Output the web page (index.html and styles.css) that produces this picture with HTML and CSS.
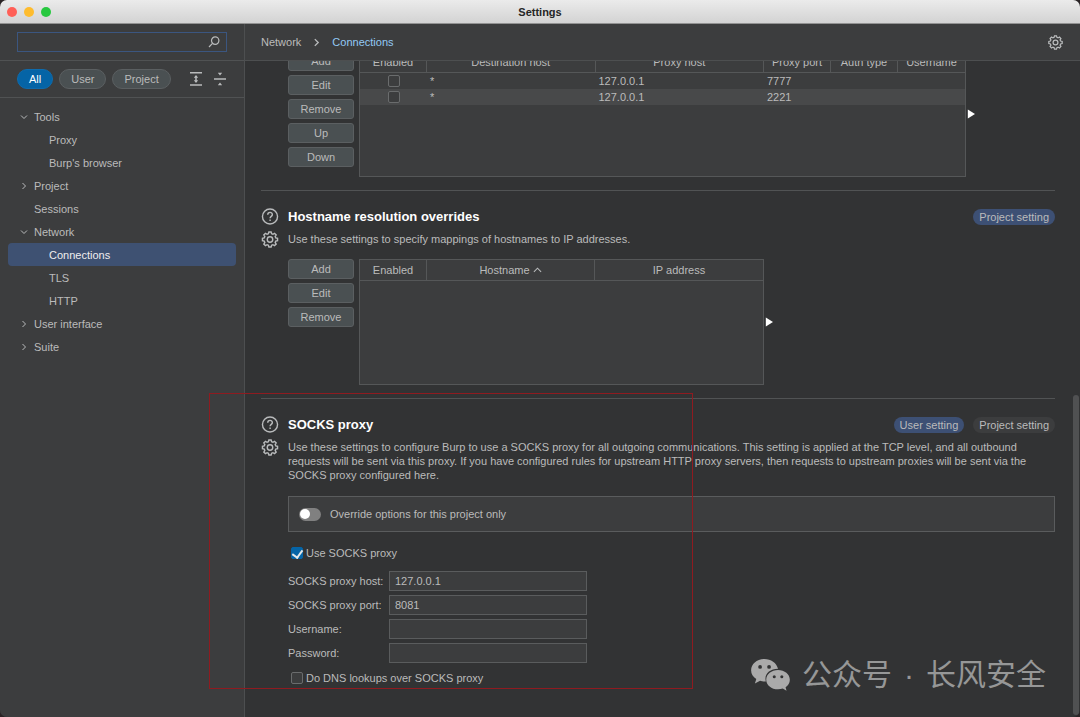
FILE: index.html
```html
<!DOCTYPE html>
<html lang="en">
<head>
    <meta charset="UTF-8">
    <meta name="viewport" content="width=device-width, initial-scale=1.0">
    <title>Settings</title>
    <link rel="stylesheet" href="styles.css">
</head>
<body>
    <!-- shared icons -->
    <svg class="sprite" width="0" height="0">
        <symbol id="gear" viewBox="0 0 18 18">
            <path d="M7.3 2.9 L7.8 1 H10.2 L10.7 2.9 L12.1 3.5 L13.8 2.5 L15.5 4.2 L14.5 5.9 L15.1 7.3 L17 7.8 V10.2 L15.1 10.7 L14.5 12.1 L15.5 13.8 L13.8 15.5 L12.1 14.5 L10.7 15.1 L10.2 17 H7.8 L7.3 15.1 L5.9 14.5 L4.2 15.5 L2.5 13.8 L3.5 12.1 L2.9 10.7 L1 10.2 V7.8 L2.9 7.3 L3.5 5.9 L2.5 4.2 L4.2 2.5 L5.9 3.5 Z"/>
            <circle cx="9" cy="9" r="2.9"/>
        </symbol>
        <symbol id="help" viewBox="0 0 18 18">
            <circle cx="9" cy="9" r="8"/>
            <path d="M6.6 7.2 C6.6 3.8 11.6 3.9 11.5 7 C11.4 8.9 9.1 8.8 9.1 10.9 M9.1 12.3 V13.8"/>
        </symbol>
        <symbol id="chevron" viewBox="0 0 8 8">
            <path d="M2.5 1 L5.5 4 L2.5 7"/>
        </symbol>
    </svg>

    <div class="window">
        <header class="titlebar">
            <div class="lights">
                <button class="light close" aria-label="Close"></button>
                <button class="light minimise" aria-label="Minimise"></button>
                <button class="light zoom" aria-label="Zoom"></button>
            </div>
            <h1>Settings</h1>
        </header>

        <div class="panes">
            <aside class="sidebar">
                <form class="search">
                    <div class="search-box">
                        <input type="text" aria-label="Search settings">
                        <svg class="icon search-icon" viewBox="0 0 12 12"><circle cx="7.2" cy="4.6" r="3.7"/><path d="M4.5 7.3 L1 11"/></svg>
                    </div>
                </form>
                <div class="filters">
                    <button class="pill active">All</button>
                    <button class="pill">User</button>
                    <button class="pill">Project</button>
                    <button class="tool expand" aria-label="Expand all">
                        <svg class="icon" viewBox="0 0 14 14"><path d="M1 .8 H13 M1 13 H13 M7 5 V9"/><path class="fill" d="M7 3 L9.2 5.7 H4.8 Z M7 11 L9.2 8.3 H4.8 Z"/></svg>
                    </button>
                    <button class="tool" aria-label="Collapse all">
                        <svg class="icon" viewBox="0 0 14 14"><path d="M1 7 H13"/><path class="fill" d="M7 3.6 L9.2 .8 H4.8 Z M7 10.4 L9.2 13.2 H4.8 Z"/></svg>
                    </button>
                </div>
                <nav>
                    <ul class="tree">
                        <li><a href="#"><svg class="icon chevron open"><use href="#chevron"/></svg>Tools</a></li>
                        <li><a href="#" class="child">Proxy</a></li>
                        <li><a href="#" class="child">Burp's browser</a></li>
                        <li><a href="#"><svg class="icon chevron"><use href="#chevron"/></svg>Project</a></li>
                        <li><a href="#" class="leaf">Sessions</a></li>
                        <li><a href="#"><svg class="icon chevron open"><use href="#chevron"/></svg>Network</a></li>
                        <li><a href="#" class="child selected">Connections</a></li>
                        <li><a href="#" class="child">TLS</a></li>
                        <li><a href="#" class="child">HTTP</a></li>
                        <li><a href="#"><svg class="icon chevron"><use href="#chevron"/></svg>User interface</a></li>
                        <li><a href="#"><svg class="icon chevron"><use href="#chevron"/></svg>Suite</a></li>
                    </ul>
                </nav>
            </aside>

            <main class="main">
                <div class="crumbs">
                    <a href="#">Network</a>
                    <svg class="icon crumb-arrow"><use href="#chevron"/></svg>
                    <a href="#" class="current">Connections</a>
                    <button class="icon-button options" aria-label="Options"><svg class="icon"><use href="#gear"/></svg></button>
                </div>

                <div class="scroller">
                    <div class="content">
                        <section class="section upstream">
                            <div class="body">
                                <div class="editor">
                                    <div class="buttons">
                                        <button>Add</button>
                                        <button>Edit</button>
                                        <button>Remove</button>
                                        <button>Up</button>
                                        <button>Down</button>
                                    </div>
                                    <div class="table-box wide">
                                        <table>
                                            <colgroup>
                                                <col class="narrow"><col><col><col class="narrow"><col class="narrow"><col class="narrow">
                                            </colgroup>
                                            <thead>
                                                <tr><th>Enabled</th><th>Destination host</th><th>Proxy host</th><th>Proxy port</th><th>Auth type</th><th>Username</th></tr>
                                            </thead>
                                            <tbody>
                                                <tr><td class="tick"><input type="checkbox" aria-label="Enable 127.0.0.1:7777"></td><td>*</td><td>127.0.0.1</td><td>7777</td><td></td><td></td></tr>
                                                <tr><td class="tick"><input type="checkbox" aria-label="Enable 127.0.0.1:2221"></td><td>*</td><td>127.0.0.1</td><td>2221</td><td></td><td></td></tr>
                                            </tbody>
                                        </table>
                                    </div>
                                    <button class="expander" aria-label="Widen table"></button>
                                </div>
                            </div>
                        </section>

                        <section class="section">
                            <div class="side-icons">
                                <button class="icon-button" aria-label="Help"><svg class="icon"><use href="#help"/></svg></button>
                                <button class="icon-button" aria-label="Options"><svg class="icon"><use href="#gear"/></svg></button>
                            </div>
                            <div class="body">
                                <div class="heading">
                                    <h2>Hostname resolution overrides</h2>
                                    <span class="badge on">Project setting</span>
                                </div>
                                <p>Use these settings to specify mappings of hostnames to IP addresses.</p>
                                <div class="editor">
                                    <div class="buttons">
                                        <button>Add</button>
                                        <button>Edit</button>
                                        <button>Remove</button>
                                    </div>
                                    <div class="table-box">
                                        <table>
                                            <colgroup><col class="narrow"><col><col></colgroup>
                                            <thead>
                                                <tr><th>Enabled</th><th>Hostname <svg class="icon sort" viewBox="0 0 10 6"><path d="M1 5 L5 1 L9 5"/></svg></th><th>IP address</th></tr>
                                            </thead>
                                        </table>
                                    </div>
                                    <button class="expander" aria-label="Widen table"></button>
                                </div>
                            </div>
                        </section>

                        <section class="section">
                            <div class="side-icons">
                                <button class="icon-button" aria-label="Help"><svg class="icon"><use href="#help"/></svg></button>
                                <button class="icon-button" aria-label="Options"><svg class="icon"><use href="#gear"/></svg></button>
                            </div>
                            <div class="body">
                                <div class="heading">
                                    <h2>SOCKS proxy</h2>
                                    <span class="badge on">User setting</span>
                                    <span class="badge">Project setting</span>
                                </div>
                                <p>Use these settings to configure Burp to use a SOCKS proxy for all outgoing communications. This setting is applied at the TCP level, and all outbound requests will be sent via this proxy. If you have configured rules for upstream HTTP proxy servers, then requests to upstream proxies will be sent via the SOCKS proxy configured here.</p>
                                <div class="override">
                                    <input type="checkbox" role="switch" class="switch" id="override">
                                    <label for="override">Override options for this project only</label>
                                </div>
                                <div class="check-row">
                                    <input type="checkbox" id="use-socks" checked>
                                    <label for="use-socks">Use SOCKS proxy</label>
                                </div>
                                <div class="fields">
                                    <label for="host">SOCKS proxy host:</label>
                                    <input type="text" id="host" value="127.0.0.1">
                                    <label for="port">SOCKS proxy port:</label>
                                    <input type="text" id="port" value="8081">
                                    <label for="username">Username:</label>
                                    <input type="text" id="username">
                                    <label for="password">Password:</label>
                                    <input type="password" id="password">
                                </div>
                                <div class="check-row">
                                    <input type="checkbox" id="dns">
                                    <label for="dns">Do DNS lookups over SOCKS proxy</label>
                                </div>
                            </div>
                        </section>
                    </div>
                    <div class="scrollbar"><div class="thumb"></div></div>
                </div>
            </main>
        </div>

        <div class="marker"></div>
        <div class="watermark" lang="zh">
            <svg viewBox="0 0 42 36">
                <path d="M15 1 C7 1 1 6.400 1 13 C1 17 3 20 6.500 22.300 L5 27 L10.500 24 C12.500 24.700 14.800 25 16.600 24.800 C14.500 17.500 20.500 11.500 29.500 11.500 C28 5 22 1 15 1 Z"/>
                <path d="M29.500 12.800 C22.500 12.800 17 17.300 17 23 C17 28.700 22.500 33.200 29.500 33.200 C31.300 33.200 33 32.900 34.500 32.400 L38.500 34.600 L37.500 31 C40.300 29 42 26.200 42 23 C42 17.300 36.500 12.800 29.500 12.800 Z"/>
                <g class="eyes"><circle cx="10.500" cy="9.500" r="2"/><circle cx="20" cy="9.500" r="2"/><circle cx="25.500" cy="19.800" r="1.600"/><circle cx="33.500" cy="19.800" r="1.600"/></g>
            </svg>
            <span>公众号</span><span>·</span><span>长风安全</span>
        </div>
    </div>
</body>
</html>
```
FILE: styles.css
```css
* {
    box-sizing: border-box;
}
body {
    margin: 0;
    height: 100vh;
    overflow: hidden;
    background-color: #2a2325;
    color: #bbbbbb;
    font-family: "Liberation Sans", Arial, sans-serif;
    font-size: 11px;
    line-height: 14px;
}
button, input {
    margin: 0;
    padding: 0;
    border: none;
    background: none;
    color: inherit;
    font: inherit;
}
a {
    color: inherit;
    text-decoration: none;
}
.sprite {
    position: absolute;
}
.icon {
    display: block;
    width: 100%;
    height: 100%;
    fill: none;
    stroke: #b9bbbc;
    stroke-width: 1.5;
    overflow: visible;
}
.icon .fill {
    fill: #b9bbbc;
    stroke: none;
}

/* window */
.window {
    position: relative;
    display: flex;
    flex-direction: column;
    height: 100%;
    border-radius: 7px;
    overflow: hidden;
    background-color: #323334;
}
.titlebar {
    display: flex;
    align-items: center;
    flex: none;
    height: 24px;
    padding: 0 7px;
    background: linear-gradient(#ebebeb, #d3d3d3);
    border-bottom: 1px solid #929292;
}
.lights {
    display: flex;
    flex: 1;
    gap: 7px;
}
.light {
    width: 10px;
    height: 10px;
    border-radius: 50%;
}
.close {
    background-color: #ff5f57;
}
.minimise {
    background-color: #febc2e;
}
.zoom {
    background-color: #28c840;
}
.titlebar h1 {
    margin: 0;
    color: #262626;
    font-size: 11px;
}
.titlebar::after {
    content: "";
    flex: 1;
}
.panes {
    display: flex;
    flex: 1;
    min-height: 0;
}

/* sidebar */
.sidebar {
    flex: none;
    width: 245px;
    background-color: #3c3d3e;
    border-right: 1px solid #4d4f50;
}
.search, .filters {
    display: flex;
    align-items: center;
    height: 37px;
    padding: 0 17px;
    border-bottom: 1px solid #505253;
}
.search-box {
    display: flex;
    align-items: center;
    width: 100%;
    height: 20px;
    padding: 0 6px;
    border: 1px solid #3b5680;
}
.search-box input {
    flex: 1;
    min-width: 0;
    outline: none;
}
.search-icon {
    width: 12px;
    height: 12px;
    stroke-width: 1.2;
}
.pill {
    height: 20px;
    margin-right: 6px;
    padding: 0 11px;
    border: 1px solid #5b5f61;
    border-radius: 10px;
    background-color: #4a5052;
}
.pill.active {
    border-color: #0e6bad;
    background-color: #0564a6;
    color: #ffffff;
}
.tool {
    width: 14px;
    height: 14px;
}
.tool.expand {
    margin: 0 10px 0 auto;
}
.tree {
    margin: 0;
    padding: 7px 8px;
    list-style: none;
}
.tree a {
    display: flex;
    align-items: center;
    gap: 6px;
    height: 23px;
    padding-left: 12px;
    border-radius: 4px;
}
.tree .leaf {
    padding-left: 26px;
}
.tree .child {
    padding-left: 41px;
}
.tree .selected {
    background-color: #3e5172;
    color: #eeeeee;
}
.chevron {
    width: 8px;
    height: 8px;
    stroke-width: 1;
}
.chevron.open {
    transform: rotate(90deg);
}

/* main pane */
.main {
    display: flex;
    flex-direction: column;
    flex: 1;
    min-width: 0;
}
.crumbs {
    display: flex;
    align-items: center;
    flex: none;
    height: 37px;
    padding: 0 17px 0 16px;
    background-color: #3c3d3e;
    border-bottom: 1px solid #4d4f50;
}
.crumb-arrow {
    width: 9px;
    height: 9px;
    margin: 0 11px;
    stroke-width: 1.2;
}
.crumbs .current {
    color: #93c9f5;
}
.icon-button {
    display: block;
    width: 18px;
    height: 17px;
    border-radius: 50%;
}
.icon-button.options {
    width: 15px;
    height: 15px;
    margin-left: auto;
}
.scroller {
    display: flex;
    flex: 1;
    min-height: 0;
    overflow: hidden;
}
/* content sits scrolled part of the way down */
.content {
    flex: 1;
    min-width: 0;
    margin-top: -10px;
    padding: 0 18px 0 16px;
}
.scrollbar {
    display: flex;
    flex-direction: column;
    justify-content: flex-end;
    width: 7px;
    padding: 0 1px 2px 0;
}
.thumb {
    height: 49%;
    border-radius: 3px;
    background-color: #505152;
}
.section {
    display: flex;
    gap: 9px;
    padding: 17px 0 13px;
    border-top: 1px solid #515354;
}
.section.upstream {
    padding: 0 0 13px 27px;
    border-top: none;
}
.side-icons {
    display: flex;
    flex-direction: column;
    gap: 6px;
}
.body {
    flex: 1;
    min-width: 0;
}
.heading {
    display: flex;
    align-items: center;
    gap: 9px;
    height: 17px;
    margin-bottom: 7px;
}
h2 {
    flex: 1;
    margin: 0;
    color: #ffffff;
    font-size: 13px;
}
.badge {
    height: 16px;
    padding: 1px 6px;
    border-radius: 8px;
    background-color: #3c3d3e;
}
.badge.on {
    background-color: #3d5074;
}
p {
    margin: 0 0 13px;
}

/* table with its edit buttons */
.editor {
    display: flex;
    align-items: center;
}
.buttons {
    display: flex;
    flex-direction: column;
    align-self: flex-start;
    gap: 4px;
    width: 66px;
    margin-right: 5px;
}
.buttons button {
    height: 20px;
    border: 1px solid #5b5f61;
    border-radius: 3px;
    background-color: #4a5052;
}
.table-box {
    width: 405px;
    height: 126px;
    background-color: #3c3d3e;
    border: 1px solid #555758;
}
.table-box.wide {
    width: 607px;
}
table {
    width: 100%;
    table-layout: fixed;
    border-collapse: separate;
    border-spacing: 0;
}
.narrow {
    width: 67px;
}
th {
    height: 21px;
    padding: 0;
    border-right: 1px solid #555758;
    border-bottom: 1px solid #555758;
    font-weight: normal;
    text-align: center;
}
th:last-child {
    border-right: none;
}
td {
    height: 16px;
    padding: 0 3px;
    line-height: 16px;
}
tbody tr:nth-child(even) {
    background-color: #48494a;
}
.tick input {
    margin: 0 auto;
}
.sort {
    display: inline-block;
    width: 9px;
    height: 6px;
    stroke-width: 1.2;
    vertical-align: 1px;
}
.expander {
    width: 8px;
    height: 10px;
    margin-left: 1px;
    background-color: #ffffff;
    clip-path: polygon(10% 5%, 100% 50%, 10% 95%);
}

/* form controls */
input[type="checkbox"] {
    display: block;
    appearance: none;
    flex: none;
    width: 12px;
    height: 12px;
    border: 1px solid #6a6c6d;
    border-radius: 2px;
    background-color: #3c3d3e;
}
input[type="checkbox"]:checked {
    border-color: #0564a6;
    background-color: #0564a6;
}
input[type="checkbox"]:checked::after {
    content: "";
    display: block;
    width: 5px;
    height: 8px;
    margin: 0 auto;
    border: solid #e4e8ea;
    border-width: 0 2px 2px 0;
    transform: rotate(36deg);
}
.override {
    display: flex;
    align-items: center;
    gap: 9px;
    height: 36px;
    margin-top: 14px;
    padding: 0 10px;
    background-color: #3c3d3e;
    border: 1px solid #5a5c5d;
}
input[type="checkbox"].switch {
    width: 22px;
    height: 13px;
    padding: 1px;
    border: none;
    border-radius: 7px;
    background-color: #808080;
}
.switch::before {
    content: "";
    display: block;
    width: 10px;
    height: 10px;
    border-radius: 50%;
    background-color: #ffffff;
}
.check-row {
    display: flex;
    align-items: center;
    gap: 3px;
    height: 18px;
    padding-left: 3px;
}
.override + .check-row {
    margin: 12px 0 9px;
}
.fields {
    display: grid;
    grid-template-columns: 96px 198px;
    column-gap: 5px;
    row-gap: 4px;
    align-items: center;
    margin-bottom: 6px;
}
.fields label {
    white-space: nowrap;
}
.fields input {
    height: 20px;
    padding: 0 5px;
    background-color: #3c3d3e;
    border: 1px solid #5a5c5d;
}

/* overlays */
.marker {
    position: absolute;
    top: 393px;
    left: 209px;
    width: 484px;
    height: 296px;
    border: 1px solid #8f1b20;
    pointer-events: none;
}
.watermark {
    position: absolute;
    right: 34px;
    bottom: 20px;
    display: flex;
    align-items: center;
    gap: 12px;
    color: #969797;
    font-family: "Liberation Sans", "Noto Sans CJK SC", sans-serif;
    font-size: 30px;
    font-weight: 400;
    line-height: 44px;
    pointer-events: none;
}
.watermark svg {
    width: 40px;
    height: 34px;
    fill: #aaaaaa;
}
.watermark .eyes {
    fill: #323334;
}
```
